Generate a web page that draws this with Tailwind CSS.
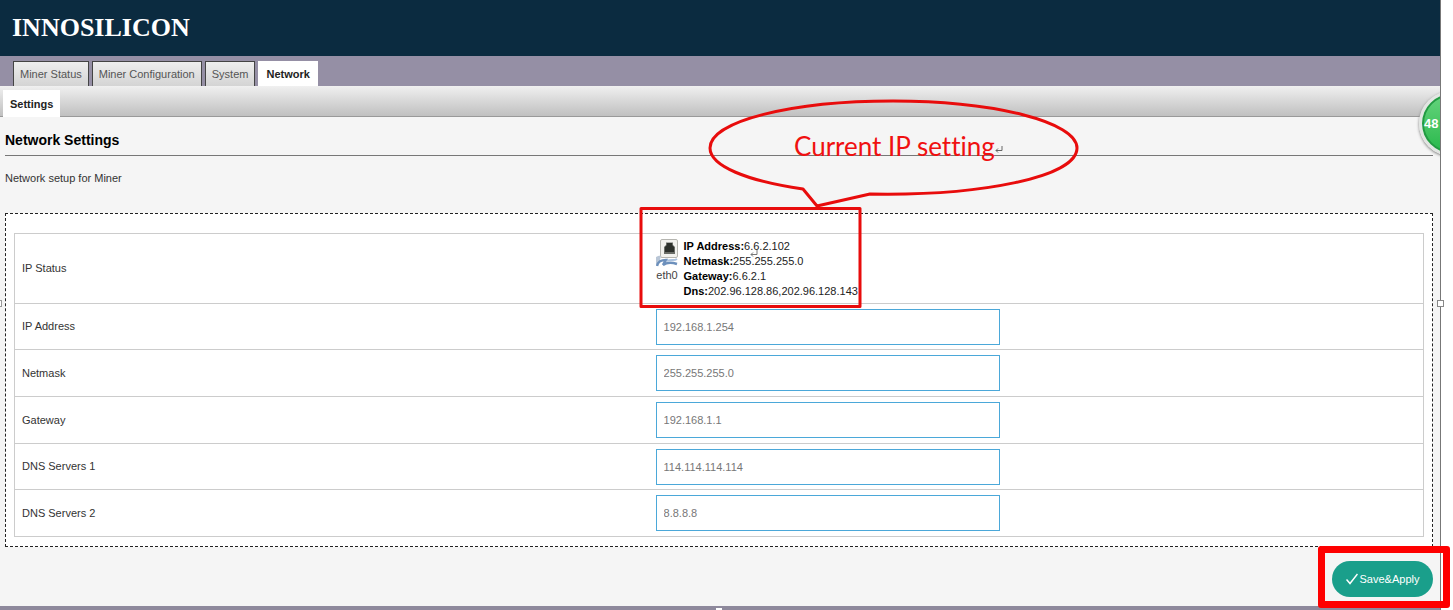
<!DOCTYPE html>
<html lang="en">
<head>
<meta charset="utf-8">
<title>Innosilicon - Network Settings</title>
<script src="https://cdn.jsdelivr.net/npm/@tailwindcss/browser@4"></script>
</head>
<body class="min-h-screen bg-white pr-3 font-['Liberation_Sans',Arial,sans-serif] text-[11px] text-[#333]">
<div class="relative flex min-h-screen flex-col border-r border-[#777] bg-[#f5f5f5]">
  <header class="flex h-14 items-center bg-[#0b2b40] px-3">
    <a href="#" class="font-['Liberation_Serif',serif] text-[26px] leading-none font-bold text-white">INNOSILICON</a>
  </header>
  <nav class="flex h-[30px] items-end gap-[3px] bg-[#958fa5] pl-[13px] text-[#555]" aria-label="Main">
    <a href="#" class="flex h-[25px] items-center border border-b-0 border-[#444] bg-linear-to-b from-[#eee] to-[#d4d4d4] px-1.5 pt-px">Miner Status</a>
    <a href="#" class="flex h-[25px] items-center border border-b-0 border-[#444] bg-linear-to-b from-[#eee] to-[#d4d4d4] px-1.5 pt-px">Miner Configuration</a>
    <a href="#" class="flex h-[25px] items-center border border-b-0 border-[#444] bg-linear-to-b from-[#eee] to-[#d4d4d4] px-1.5 pt-px">System</a>
    <a href="#" aria-current="page" class="flex h-[25px] items-center bg-white px-2 pt-px font-bold text-[#222]">Network</a>
  </nav>
  <nav class="flex h-[31px] items-end border-b border-[#999] bg-linear-to-b from-[#f0f0f0] to-[#c0c0c0] pl-[3px]" aria-label="Network">
    <a href="#" aria-current="page" class="-mb-px flex h-[27px] items-center bg-white px-[7px] pt-px font-bold text-[#222]">Settings</a>
  </nav>
  <main class="flex flex-1 flex-col pr-[7px] pl-[5px]">
    <h1 class="border-b border-[#777] pt-[13px] pb-1 text-[14px] leading-[21px] font-bold text-black">Network Settings</h1>
    <p class="pt-[14px] leading-4">Network setup for Miner</p>
    <form class="mt-[27px] flex flex-col">
      <div class="border border-dashed border-[#222] bg-white px-2 pt-[19px] pb-[9px]">
        <table class="w-full table-fixed border-collapse border border-[#ccc]">
          <tbody>
            <tr class="h-[70px] border-b border-[#ccc]">
              <th scope="row" class="w-[45%] px-[7px] text-left font-normal">IP Status</th>
              <td class="px-[7px]">
                <div class="flex gap-[5px]">
                  <div class="w-[23px] text-center">
                    <svg class="h-7 w-[23px]" viewBox="0 0 23 28" aria-hidden="true">
                      <rect x="4.500" y=".5" width="17" height="18" rx="1.5" fill="#f1f1ee" stroke="#b5b5b0"/>
                      <path d="M8 15V8l2-2V3.500h7V6l2 2v7z" fill="#6a6d68"/>
                      <path d="M9 13V8l2-2V4h5v2l2 2v5z" fill="#2c302c"/>
                      <path d="M0 18c2-1 4-1.500 5-1l-2 8H0z" fill="#b9c6d6"/>
                      <path d="M1 27c1-5 4-6 9-6l-3 5c4-3 8-3 14-1" fill="none" stroke="#6d90bc" stroke-width="2.500"/>
                      <path d="M11 22c4-2 7 0 10-2" fill="none" stroke="#a9c1de" stroke-width="2"/>
                    </svg>
                    <span class="block leading-4 text-[#444]">eth0</span>
                  </div>
                  <div class="leading-[15px] whitespace-nowrap text-[#222]">
                    <div><b class="text-black">IP Address:</b>6.6.2.102</div>
                    <div><b class="text-black">Netmask:</b>255.255.255.0</div>
                    <div><b class="text-black">Gateway:</b>6.6.2.1</div>
                    <div><b class="text-black">Dns:</b>202.96.128.86,202.96.128.143</div>
                  </div>
                </div>
              </td>
            </tr>
            <tr class="h-[46px] border-b border-[#ccc]">
              <th scope="row" class="px-[7px] text-left font-normal"><label for="ip">IP Address</label></th>
              <td class="px-[7px]"><input id="ip" type="text" placeholder="192.168.1.254" class="block h-9 w-[344px] border border-[#4ba8d9] bg-white px-[7px] placeholder:text-[#777]"></td>
            </tr>
            <tr class="h-[47px] border-b border-[#ccc]">
              <th scope="row" class="px-[7px] text-left font-normal"><label for="mask">Netmask</label></th>
              <td class="px-[7px]"><input id="mask" type="text" placeholder="255.255.255.0" class="block h-9 w-[344px] border border-[#4ba8d9] bg-white px-[7px] placeholder:text-[#777]"></td>
            </tr>
            <tr class="h-[47px] border-b border-[#ccc]">
              <th scope="row" class="px-[7px] text-left font-normal"><label for="gw">Gateway</label></th>
              <td class="px-[7px]"><input id="gw" type="text" placeholder="192.168.1.1" class="block h-9 w-[344px] border border-[#4ba8d9] bg-white px-[7px] placeholder:text-[#777]"></td>
            </tr>
            <tr class="h-[46px] border-b border-[#ccc]">
              <th scope="row" class="px-[7px] text-left font-normal"><label for="dns1">DNS Servers 1</label></th>
              <td class="px-[7px]"><input id="dns1" type="text" placeholder="114.114.114.114" class="block h-9 w-[344px] border border-[#4ba8d9] bg-white px-[7px] placeholder:text-[#777]"></td>
            </tr>
            <tr class="h-[47px]">
              <th scope="row" class="px-[7px] text-left font-normal"><label for="dns2">DNS Servers 2</label></th>
              <td class="px-[7px]"><input id="dns2" type="text" placeholder="8.8.8.8" class="block h-9 w-[344px] border border-[#4ba8d9] bg-white px-[7px] placeholder:text-[#777]"></td>
            </tr>
          </tbody>
        </table>
      </div>
      <div class="flex justify-end pt-[14px]">
        <div class="relative">
          <button type="submit" class="flex h-9 w-[101px] items-center justify-center gap-[2px] rounded-full bg-[#1a9f8b] text-white">
            <svg class="h-3 w-3" viewBox="0 0 12 12" fill="none" stroke="#fff" stroke-width="1.500" aria-hidden="true"><path d="M.500 6.500 4 10.500 11.500 1"/></svg>
            <span>Save&amp;Apply</span>
          </button>
          <div class="pointer-events-none absolute -top-[15px] -right-[17px] -bottom-[11px] -left-[14px] rounded-[3px] border-[7px] border-[#fe0000]"></div>
        </div>
      </div>
    </form>
  </main>
  <footer class="h-1 bg-[#8e899c]"></footer>

  <div class="absolute top-[88px] right-0 h-[72px] w-6 overflow-hidden">
    <div class="absolute top-[3px] left-[3px] flex h-[65px] w-[65px] items-center rounded-full border-[3px] border-[#e2e5e2] bg-linear-to-b from-[#64d47d] to-[#22b84a] pl-[2px] text-[13px] font-bold text-white shadow-[0_1px_3px_#777] inset-ring-2 inset-ring-[#239a43]">48</div>
  </div>
  <div class="absolute top-[300px] -right-1 h-[7px] w-[7px] border border-[#888] bg-white"></div>
  <div class="absolute top-[300px] -left-1 h-[7px] w-[6px] border border-[#999] bg-white"></div>
  <div class="absolute bottom-0 left-[716px] h-0.5 w-1.5 bg-white"></div>

  <div class="pointer-events-none absolute top-[98px] left-[639px] w-[442px]">
    <svg class="block h-[212px] w-[442px]" viewBox="0 0 442 212" fill="none" stroke="#e80c0c" stroke-width="3" stroke-linejoin="round" aria-hidden="true">
      <path d="M164 91C108 83 71 68 71 50 71 23 153 3 254 3S438 24 438 50C438 79 342 98 231 96L178 108Z"/>
      <rect x="2" y="110.500" width="219" height="98"/>
    </svg>
    <div class="absolute top-8 left-[155px] flex items-center font-[Lato,sans-serif] text-[26px] leading-8 whitespace-nowrap text-[#f01010] [font-variant-ligatures:none]">Current IP setting
      <svg class="mt-2 h-2 w-2" viewBox="0 0 8 8" fill="none" stroke="#666" aria-hidden="true"><path d="M7 0v4.500H1M3 2.500l-2 2 2 2"/></svg>
    </div>
    <svg class="absolute top-[152px] left-[111px] h-2 w-2" viewBox="0 0 8 8" fill="none" stroke="#777" aria-hidden="true"><path d="M7 0v4.500H1M3 2.500l-2 2 2 2"/></svg>
  </div>
</div>
</body>
</html>
